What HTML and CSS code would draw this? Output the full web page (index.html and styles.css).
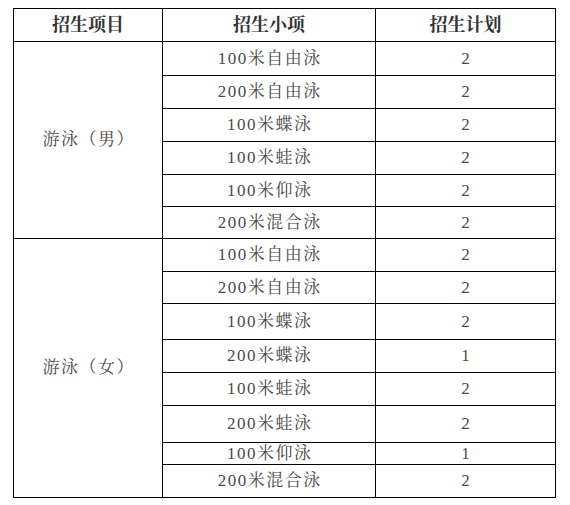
FILE: index.html
```html
<!DOCTYPE html>
<html lang="zh-CN">
<head>
<meta charset="utf-8">
<link rel="stylesheet" href="styles.css">
</head>
<body>
<table class="plan">
  <colgroup>
    <col class="c1"><col class="c2"><col class="c3">
  </colgroup>
  <thead>
    <tr class="r33"><th>招生项目</th><th>招生小项</th><th>招生计划</th></tr>
  </thead>
  <tbody>
    <tr class="r34"><td rowspan="6">游泳（男）</td><td>100米自由泳</td><td>2</td></tr>
    <tr class="r33"><td>200米自由泳</td><td>2</td></tr>
    <tr class="r33"><td>100米蝶泳</td><td>2</td></tr>
    <tr class="r33"><td>100米蛙泳</td><td>2</td></tr>
    <tr class="r32"><td>100米仰泳</td><td>2</td></tr>
    <tr class="r32"><td>200米混合泳</td><td>2</td></tr>
    <tr class="r33"><td rowspan="8">游泳（女）</td><td>100米自由泳</td><td>2</td></tr>
    <tr class="r32"><td>200米自由泳</td><td>2</td></tr>
    <tr class="r36"><td>100米蝶泳</td><td>2</td></tr>
    <tr class="r33"><td>200米蝶泳</td><td>1</td></tr>
    <tr class="r33"><td>100米蛙泳</td><td>2</td></tr>
    <tr class="r37"><td>200米蛙泳</td><td>2</td></tr>
    <tr class="r22"><td>100米仰泳</td><td>1</td></tr>
    <tr class="r33"><td>200米混合泳</td><td>2</td></tr>
  </tbody>
</table>
</body>
</html>
```
FILE: styles.css
```css
html, body {
  background: #ffffff;
}
body {
  margin: 8px 0 0 13px;
  font-family: "Liberation Serif", "Noto Serif CJK SC", "Noto Sans CJK SC", serif;
  color: #4a4a4a;
}
.plan {
  border-collapse: collapse;
  table-layout: fixed;
  width: 542px;
}
.c1 { width: 149px; }
.c2 { width: 213px; }
.c3 { width: 180px; }
.plan th, .plan td {
  border: 1px solid #000000;
  padding: 0;
  text-align: center;
  vertical-align: middle;
  font-size: 17px;
  line-height: 18px;
}
.plan td {
  letter-spacing: 1.5px;
  text-indent: 1.5px;
}
.plan th {
  font-size: 18px;
  font-weight: bold;
  color: #333333;
}
.r22 { height: 22px; }
.r32 { height: 32px; }
.r33 { height: 33px; }
.r34 { height: 34px; }
.r36 { height: 36px; }
.r37 { height: 37px; }
```
